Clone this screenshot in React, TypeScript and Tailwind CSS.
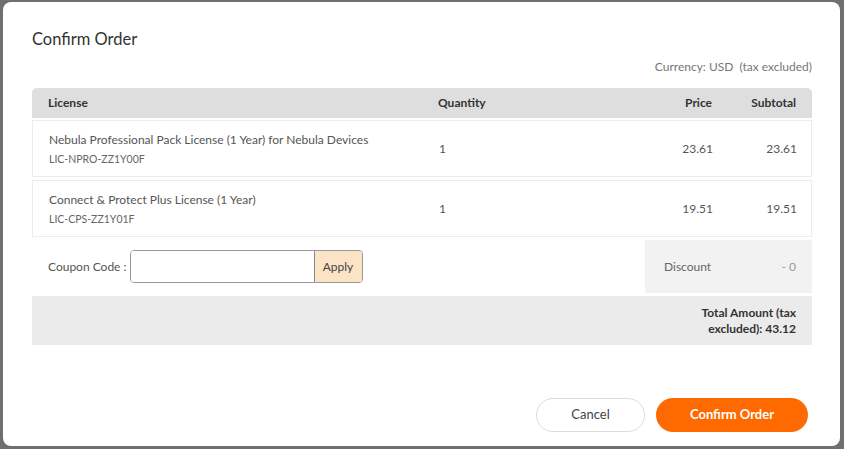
import React from 'react'

const items = [
  { name: 'Nebula Professional Pack License (1 Year) for Nebula Devices', sku: 'LIC-NPRO-ZZ1Y00F', qty: 1, price: '23.61', subtotal: '23.61' },
  { name: 'Connect & Protect Plus License (1 Year)', sku: 'LIC-CPS-ZZ1Y01F', qty: 1, price: '19.51', subtotal: '19.51' },
]

const cols = 'grid grid-cols-[390px_163px_111px_84px] items-center px-4'

export default function App() {
  return (
    <div className="w-[844px] h-[449px] bg-[#6f6f6f] p-[2px_4px_3px_3px] font-['Lato','Liberation_Sans',sans-serif]">
      <div className="flex h-full flex-col rounded-[8px] bg-white pl-[29px] pr-[28px] pt-[27px]">
        <h2 className="text-[16.5px] leading-5 text-[#333]">Confirm Order</h2>

        <p className="mt-[10px] text-right text-[12px] leading-4 text-[#777]">
          Currency: USD&nbsp; (tax excluded)
        </p>

        <div className="mt-[13px]">
          <div className={`${cols} h-[30px] rounded-t-[5px] bg-[#dedede] text-[12px] font-bold text-[#333]`}>
            <span>License</span>
            <span>Quantity</span>
            <span className="text-right">Price</span>
            <span className="text-right">Subtotal</span>
          </div>

          {items.map((it, i) => (
            <div
              key={it.sku}
              className={`${cols} ${i === 0 ? 'mt-[2px]' : 'mt-[3px]'} h-[57px] border border-[#ececec] text-[12px] text-[#555]`}
            >
              <div className="flex flex-col gap-[6px]">
                <span className="text-[12px] leading-[14px] text-[#555]">{it.name}</span>
                <span className="text-[10.5px] leading-[12px] text-[#666]">{it.sku}</span>
              </div>
              <span>{it.qty}</span>
              <span className="text-right">{it.price}</span>
              <span className="text-right">{it.subtotal}</span>
            </div>
          ))}

          <div className="mt-[2px] flex h-[55px] items-center">
            <div className="flex flex-1 items-center pl-4">
              <span className="text-[12px] text-[#555]">Coupon Code :</span>
              <div className="ml-[3px] flex h-[33px] w-[233px] overflow-hidden rounded-[4px] border border-[#999]">
                <input className="min-w-0 flex-1 bg-white px-2 text-[12px] outline-none" />
                <button className="w-[48px] border-l border-[#888] bg-[#fde3c6] text-[12px] text-[#444]">
                  Apply
                </button>
              </div>
            </div>
            <div className="flex h-[53px] w-[167px] items-center justify-between bg-[#f2f2f2] pl-[19px] pr-4 text-[12px] text-[#666]">
              <span>Discount</span>
              <span className="text-[#999]">- 0</span>
            </div>
          </div>

          <div className="mt-[2px] flex h-[49px] items-center justify-end bg-[#ebebeb] pr-4">
            <p className="w-[106px] text-right text-[12px] font-bold leading-[16px] text-[#333]">
              Total Amount (tax excluded): 43.12
            </p>
          </div>
        </div>

        <div className="mt-auto mb-[14px] flex justify-end gap-[11px] pr-[4px]">
          <button className="h-[34px] w-[109px] rounded-full border border-[#dcdcdc] bg-white text-[13px] text-[#444]">
            Cancel
          </button>
          <button className="h-[34px] w-[152px] rounded-full bg-[#ff6a00] text-[13px] font-bold text-white">
            Confirm Order
          </button>
        </div>
      </div>
    </div>
  )
}
